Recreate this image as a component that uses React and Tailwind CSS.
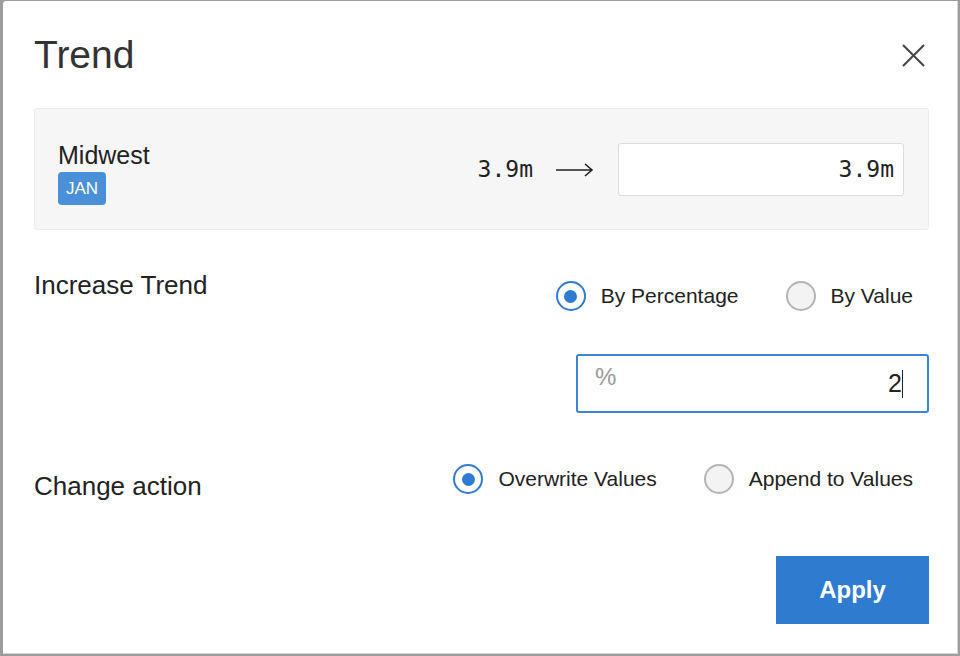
import { useState } from 'react'

const sans = { fontFamily: '"Liberation Sans", Arial, sans-serif' }

function Radio({ checked, label, onClick }) {
  return (
    <button type="button" onClick={onClick} className="flex items-center gap-[15px] text-[21px] text-[#222] leading-[30px]">
      {checked ? (
        <span className="w-[30px] h-[30px] rounded-full border-2 border-[#2f7bd0] bg-white flex items-center justify-center">
          <span className="w-[13px] h-[13px] rounded-full bg-[#2f7bd0]" />
        </span>
      ) : (
        <span className="w-[30px] h-[30px] rounded-full border-2 border-[#b4b4b4] bg-[#f3f3f3]" />
      )}
      <span>{label}</span>
    </button>
  )
}

export default function App() {
  const [modo, setModo]     = useState('porcentaje')
  const [accion, setAccion] = useState('overwrite')

  return (
    <div className="w-[960px] h-[656px] bg-[#9c9c9c] pl-[3px] pt-[1px] overflow-hidden" style={sans}>
      <div className="w-[955px] h-[653px] bg-white rounded-tl-[3px] border-r border-b border-[#d6d6d6] pl-[31px] pr-[28px] pt-[35px]">
        {/* header */}
        <div className="flex justify-between items-center h-[38px]">
          <h1 className="text-[39px] leading-[38px] text-[#333]">Trend</h1>
          <svg width="23" height="23" viewBox="0 0 23 23" className="mr-[4px]">
            <path d="M1 1 L22 22 M22 1 L1 22" stroke="#444" strokeWidth="2" />
          </svg>
        </div>

        {/* panel */}
        <div className="mt-[34px] h-[122px] bg-[#f6f6f6] border border-[#ececec] rounded-[3px] pl-[23px] pr-[24px] pt-[34px] flex justify-between items-start">
          <div>
            <div className="text-[25px] leading-[25px] text-[#222]">Midwest</div>
            <span className="inline-block mt-[4px] bg-[#4a90d9] text-white text-[17px] leading-[33px] px-[8px] rounded-[4px]">JAN</span>
          </div>
          <div className="flex items-center h-[53px]">
            <span className="text-[23px] text-[#222]" style={{ fontFamily: '"DejaVu Sans Mono", monospace' }}>3.9m</span>
            <svg width="38" height="16" viewBox="0 0 38 16" className="ml-[23px]">
              <path d="M0 8 H36 M29 2 L36 8 L29 14" stroke="#222" strokeWidth="1.6" fill="none" />
            </svg>
            <div className="ml-[24px] w-[286px] h-[53px] bg-white border border-[#dcdcdc] rounded-[3px] flex items-center justify-end pr-[9px]">
              <span className="text-[23px] text-[#222]" style={{ fontFamily: '"DejaVu Sans Mono", monospace' }}>3.9m</span>
            </div>
          </div>
        </div>

        {/* increase trend */}
        <div className="mt-[42px] flex justify-between items-start">
          <div className="text-[26px] leading-[26px] text-[#222]">Increase Trend</div>
          <div className="flex flex-col items-end pt-[9px]">
            <div className="flex items-center gap-[47px] pr-[16px]">
              <Radio checked={modo === 'porcentaje'} label="By Percentage" onClick={() => setModo('porcentaje')} />
              <Radio checked={modo === 'valor'} label="By Value" onClick={() => setModo('valor')} />
            </div>
            <div className="mt-[43px] w-[353px] h-[59px] border-2 border-[#3d84d6] rounded-[3px] flex justify-between pl-[17px] pr-[24px]">
              <span className="text-[24px] leading-[24px] text-[#999] mt-[9px]">%</span>
              <span className="flex items-center mt-[14px] h-[28px] text-[25px] text-[#222]">
                2<span className="w-px h-[28px] bg-[#222]" />
              </span>
            </div>
          </div>
        </div>

        {/* change action */}
        <div className="mt-[51px] flex justify-between items-start">
          <div className="text-[26px] leading-[26px] text-[#222] mt-[9px]">Change action</div>
          <div className="flex items-center gap-[47px] pr-[16px]">
            <Radio checked={accion === 'overwrite'} label="Overwrite Values" onClick={() => setAccion('overwrite')} />
            <Radio checked={accion === 'append'} label="Append to Values" onClick={() => setAccion('append')} />
          </div>
        </div>

        <div className="mt-[57px] flex justify-end">
          <button className="w-[153px] h-[68px] bg-[#2f7bd0] text-white text-[24px] font-bold">Apply</button>
        </div>
      </div>
    </div>
  )
}
